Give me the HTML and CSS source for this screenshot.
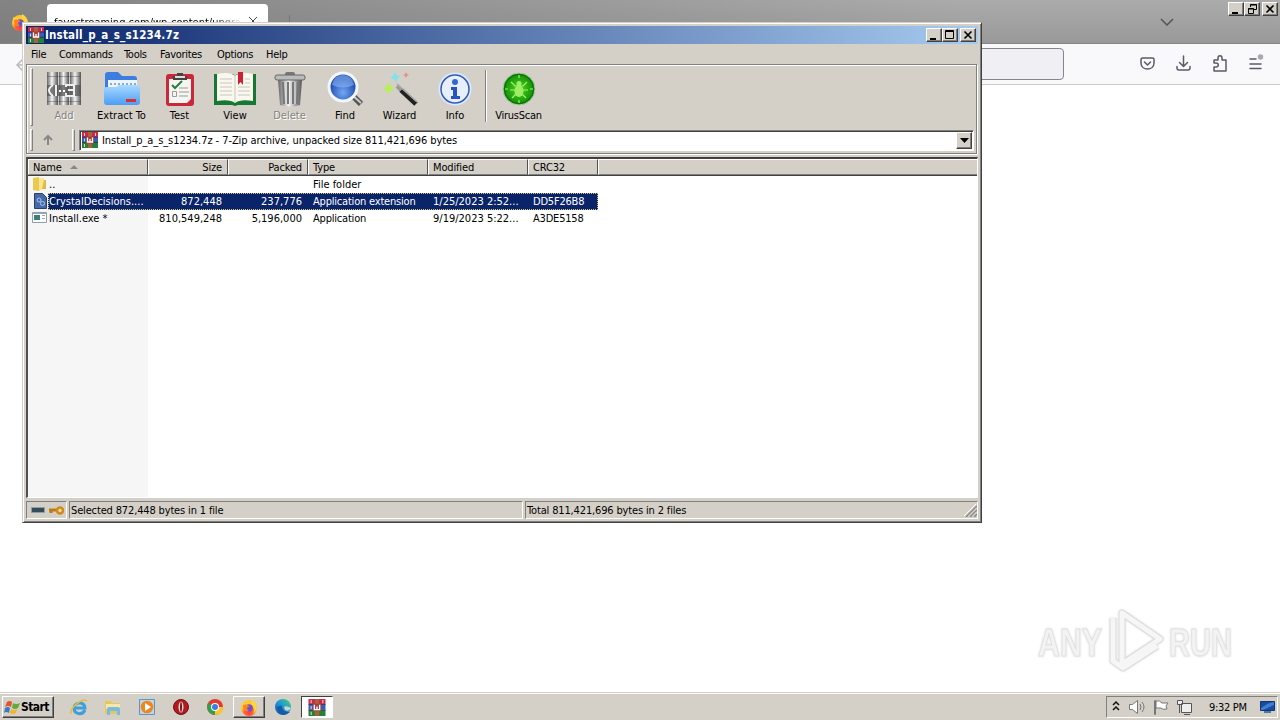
FILE: index.html
```
<!DOCTYPE html>
<html lang="en">
<head>
<meta charset="utf-8">
<title>Install_p_a_s_s1234.7z</title>
<link rel="stylesheet" href="styles.css">
</head>
<body>
<svg class="defs" width="0" height="0">
  <defs>
    <linearGradient id="silver"><stop offset="0" stop-color="#666"/><stop offset=".45" stop-color="#f4f4f4"/><stop offset="1" stop-color="#555"/></linearGradient>
    <linearGradient id="folder" x2="0" y2="1"><stop offset="0" stop-color="#a9daff"/><stop offset="1" stop-color="#4c9cf5"/></linearGradient>
    <radialGradient id="lens" cy=".7"><stop offset="0" stop-color="#74a8f4"/><stop offset="1" stop-color="#1f4db0"/></radialGradient>
    <radialGradient id="green"><stop offset="0" stop-color="#4fd61c"/><stop offset="1" stop-color="#118a08"/></radialGradient>
    <radialGradient id="fox" cy=".8"><stop offset="0" stop-color="#ff3b52"/><stop offset=".6" stop-color="#ff6a28"/><stop offset="1" stop-color="#ffc531"/></radialGradient>
    <linearGradient id="edge" x1="1" x2="0" y2="1"><stop offset="0" stop-color="#4bcf74"/><stop offset=".5" stop-color="#1a98dc"/><stop offset="1" stop-color="#134b9b"/></linearGradient>
    <symbol id="books" viewBox="0 0 16 16">
      <path fill="#c92a48" d="M0 0h16v5H0z"/><path fill="#2f5fc0" d="M0 5h16v5H0z"/><path fill="#23813c" d="M0 10h16v6H0z"/>
      <path stroke="#3b2040" stroke-width=".7" d="M0 5.200h16M0 10.400h16"/><path stroke="#f0c8d4" stroke-width="1" d="M2.500 1v3M2.500 6.500v3M2.500 12v3M13.500 1v3"/>
      <path fill="#a8623a" d="M6 0h4v16H6z"/><path fill="#a04040" d="M4 4.500h8v7H4z"/><path fill="none" stroke="#fff" stroke-width="1.300" d="M5.500 5.500V10h5V5.500M8 7v3"/>
    </symbol>
    <symbol id="firefox" viewBox="0 0 18 18">
      <circle cx="9" cy="10" r="8" fill="url(#fox)"/><path fill="#ffd43c" d="M11 1c6 3 8 10 2 15 2-5 1-8-2-10zM2 4l3 2 2-2 1 3-5 4z"/><circle cx="9" cy="10" r="3.800" fill="#7151c8"/><path fill="#ff8126" d="M3 7c4-1 5 0 7 2-3-1-4 2-1 4-5 1-6-2-6-6z"/>
    </symbol>
  </defs>
</svg>
<div class="desktop">
  <div class="tabstrip">
    <svg class="fx" width="18" height="18"><use href="#firefox"/></svg>
    <div class="tab"><span>favostreaming.com/wp-content/upgra</span><svg width="10" height="10"><path d="M1 1l8 8M9 1L1 9" stroke="#444" fill="none"/></svg></div>
    <i class="tabline"></i>
    <svg class="chev" width="14" height="8"><path d="M1 1l6 6 6-6" stroke="#555" stroke-width="1.5" fill="none"/></svg>
    <div class="winbtns outer">
      <b class="wb"><svg width="14" height="12"><path d="M3 9h6v2H3z"/></svg></b><b class="wb"><svg width="14" height="12"><path fill="none" stroke="#000" d="M5.500 4V1.500h6v5H9M5 2h7M3.500 5.500h5v5h-5zM3 6h6"/></svg></b><b class="wb gap"><svg width="14" height="12"><path stroke="#000" stroke-width="1.6" d="M3.500 2.500l7 7M10.500 2.500l-7 7"/></svg></b>
    </div>
  </div>
  <div class="navbar">
    <svg class="back" width="12" height="14"><path d="M8 1L2 7l6 6M2 7h10" fill="none" stroke="#bbb" stroke-width="1.5"/></svg>
    <div class="urlbar"></div>
    <svg class="navicons" width="126" height="22" fill="none" stroke="#5b5b66" stroke-width="1.5" stroke-linecap="round" stroke-linejoin="round">
      <path d="M3.500 6h10q1.500 0 1.500 1.500V11c0 8-13 8-13 0V7.500Q2 6 3.500 6zM5.500 10l3 3 3-3"/>
      <path d="M44.500 4v10M40.500 10.500l4 4 4-4M38 14.500V16q0 2 2 2h9q2 0 2-2v-1.500"/>
      <path d="M75 19v-4h2c3 0 3-4 0-4h-2V8h4V6c0-3 4-3 4 0v2h4v11z"/>
      <path d="M111 7h6M111 12h11M111 16.500h11"/><circle cx="121.500" cy="5" r="2" fill="#aaa" stroke="#aaa"/>
    </svg>
  </div>

  <svg class="watermark" width="230" height="76">
    <g stroke="#e2e2e2" stroke-width="1" fill="#f3f3f3">
      <text x="8" y="54" textLength="64" lengthAdjust="spacingAndGlyphs">ANY</text><text x="139" y="54" textLength="63" lengthAdjust="spacingAndGlyphs">RUN</text>
    </g>
    <g fill="none" stroke-linejoin="round">
      <path d="M92 11l38 26-38 25zM83 16v43l10 7 34-22" stroke="#ddd" stroke-width="7"/><path d="M92 11l38 26-38 25zM83 16v43l10 7 34-22" stroke="#f6f6f6" stroke-width="5"/>
    </g>
  </svg>

  <main class="window">
    <div class="titlebar">
      <svg width="16" height="16"><use href="#books"/></svg><span>Install_p_a_s_s1234.7z</span>
      <div class="winbtns">
        <b class="wb"><svg width="14" height="12"><path d="M3 9h6v2H3z"/></svg></b><b class="wb"><svg width="14" height="12"><path fill="none" stroke="#000" d="M2.500 1.500h8v8h-8zM2 2.500h9"/></svg></b><b class="wb gap"><svg width="14" height="12"><path stroke="#000" stroke-width="1.6" d="M3.500 2.500l7 7M10.500 2.500l-7 7"/></svg></b>
      </div>
    </div>
    <nav class="menu"><span class="m1">File</span><span class="m2">Commands</span><span class="m3">Tools</span><span class="m4">Favorites</span><span class="m5">Options</span><span>Help</span></nav>
    <section class="bars">
      <div class="toolbar">
        <i class="grip"></i>
        <div class="tool t1 off"><svg width="36" height="36"><rect x="1" y="1" width="11" height="33" fill="url(#silver)"/><rect x="13" y="1" width="10" height="33" fill="url(#silver)"/><rect x="24" y="1" width="11" height="33" fill="url(#silver)"/><path fill="#555" opacity=".75" d="M1 14h34v11H1z"/><path fill="#333" opacity=".35" d="M1 5h34v1H1zM1 30h34v1H1z"/><path fill="none" stroke="#eee" stroke-width="2" d="M7 14q-8 5 0 11M10 14v11M20 16v-2h8v11h-8v-3M22 19h6"/><path stroke="#fff" stroke-width="2" stroke-dasharray="2 2" d="M13 20h7"/></svg><span>Add</span></div>
        <div class="tool t2"><svg width="38" height="36"><path fill="#3c7de0" d="M2 4q0-3 3-3h10l4 4h12q3 0 3 3v20H2z"/><path fill="#eef4fa" d="M5 9h29v13H5z"/><path stroke="#7caee2" stroke-dasharray="2 2" stroke-width="2" d="M7 13h26"/><path fill="url(#folder)" d="M1 18q0-2 3-2h9l3-2h18q3 0 3 3v14q0 3-3 3H4q-3 0-3-3z"/><path fill="#d9302c" d="M23 28h10v3H23z"/></svg><span>Extract To</span></div>
        <div class="tool t3"><svg width="30" height="36"><rect x="1" y="3" width="28" height="32" rx="3" fill="#cc2639"/><path fill="#f5f5f2" d="M4 8h22v20l-4 4H4z"/><path fill="#444" d="M8 5h4V2h6v3h4v4H8z"/><path fill="#ddd" d="M10 5h10v2H10z"/><path fill="none" stroke="#25803d" stroke-width="2" d="M7 14l3 3 7-7"/><path fill="none" stroke="#999" d="M7.500 20.500h4v5h-4zM14 17h9M14 21h10M14 25h9"/></svg><span>Test</span></div>
        <div class="tool t4"><svg width="44" height="36"><path fill="#167833" d="M1 3h19l2 2 2-2h19v31H25l-3 1-3-1H1z"/><path fill="#faf8ee" d="M4 3q13-3 18 2 5-5 18-2v27q-13-2-18 2-5-4-18-2z"/><path stroke="#c8c6bc" d="M22 4v27M7 8h12M7 12h12M7 16h12M7 20h12M7 24h12M25 16h12M25 20h12M25 24h12M32 8h5M32 12h5"/><path fill="#cf1f31" d="M25 1h5v13l-2.500-3L25 14z"/></svg><span>View</span></div>
        <div class="tool t5 off"><svg width="32" height="36"><path fill="#777" d="M11 3q0-2 2-2h6q2 0 2 2v3H11z"/><path fill="url(#silver)" d="M4 9h24l-2 25q-10 3-20 0z"/><path stroke="#777" stroke-width="2" d="M9 11l1 22M14 11v22M19 11v22M24 11l-1 22"/><path stroke="#ddd" d="M11 11l1 22M16.500 11v22M21 11v22"/><rect x="1" y="4" width="30" height="5" rx="2" fill="#bbb" stroke="#666"/></svg><span>Delete</span></div>
        <div class="tool t6"><svg width="36" height="36"><path stroke="#555" stroke-width="6" d="M24 23l10 10"/><path stroke="#ccc" stroke-width="2" d="M24 23l10 9"/><circle cx="16" cy="16" r="14" fill="url(#lens)" stroke="#f2f6ff" stroke-width="3"/><path fill="#94bdfa" opacity=".55" d="M5 14q2-10 11-10t11 10q-11 5-22 0z"/></svg><span>Find</span></div>
        <div class="tool t7"><svg width="36" height="36"><path stroke="#222" stroke-width="5" d="M19 19l15 14"/><path stroke="#999" stroke-width="4" d="M15 15l4 4"/><path stroke="#aaa" stroke-width="1.500" d="M15 13l20 18"/><path fill="#b7ef58" d="M6 11l2 4 5 1-4 3-1 4-3-3-4-1 3-3z"/><path fill="#7be4ed" d="M13 1l1 3 4 1-3 3-1 4-2-4-4-1 3-2z"/><path fill="#ee8b88" d="M24 1l1 2 2 1-2 1-1 2-1-2-2-1 2-1z"/></svg><span>Wizard</span></div>
        <div class="tool t8"><svg width="36" height="36"><circle cx="18" cy="18" r="16.500" fill="#dbe8ff"/><circle cx="18" cy="18" r="14" fill="#e7efff" stroke="#315caf" stroke-width="1.500"/><circle cx="18" cy="11" r="3" fill="#3468d1"/><path fill="#2456bd" d="M14 16h6v9h3v3h-9v-3h2v-6h-2z"/></svg><span>Info</span></div>
        <i class="sep"></i>
        <div class="tool t9"><svg width="36" height="36"><circle cx="18" cy="18" r="16" fill="url(#green)" stroke="#b2c8ac"/><circle cx="18" cy="18" r="14.500" fill="none" stroke="#096c09"/><path fill="none" stroke="#9afa64" stroke-width="1.200" d="M10 11l4 4h8l4-4M9 19h18M11 27l4-4M25 27l-4-4M18 4v3M18 29v3M4 18h3M29 18h3"/><ellipse cx="18" cy="20" rx="4.500" ry="6" fill="#9fed67"/><circle cx="18" cy="12.500" r="2.500" fill="#9fed67"/></svg><span>VirusScan</span></div>
      </div>
      <div class="address">
        <i class="grip"></i><svg class="up" width="12" height="12"><path d="M6 11V2M2 6l4-4 4 4" fill="none" stroke="#888" stroke-width="2"/></svg><i class="grip g2"></i>
        <div class="combo"><svg width="16" height="16"><use href="#books"/></svg><span>Install_p_a_s_s1234.7z - 7-Zip archive, unpacked size 811,421,696 bytes</span><b><svg width="9" height="5"><path d="M0 0h9L4.500 5z"/></svg></b></div>
      </div>
    </section>
    <section class="list">
      <div class="row head"><span>Name <svg width="8" height="5"><path fill="#888" d="M0 4l4-4 4 4z"/></svg></span><span class="n">Size</span><span class="n">Packed</span><span>Type</span><span>Modified</span><span>CRC32</span><span></span></div>
      <div class="row"><span><svg width="16" height="16"><path fill="#e9c94f" d="M1 2l6-1v14l-6-1z"/><path fill="#f9e490" d="M7 2h5v11l-5 2z"/><path fill="#dfba45" d="M12 4h2v9h-4z"/></svg><em>..</em></span><span></span><span></span><span>File folder</span><span></span><span></span></div>
      <div class="row sel"><span><svg width="16" height="16"><path fill="#4669a7" stroke="#293e72" d="M2.500.500h8l4 4v11h-12z"/><g fill="none" stroke="#a8c5ef"><circle cx="7" cy="7" r="2"/><circle cx="10.500" cy="10.500" r="2"/></g></svg><em>CrystalDecisions....</em></span><span class="n">872,448</span><span class="n">237,776</span><span class="type">Application extension</span><span>1/25/2023 2:52...</span><span class="crc">DD5F26B8</span></div>
      <div class="row"><span><svg width="16" height="16"><path fill="#fff" stroke="#8d9eae" d="M.500 2.500h14v10H.500z"/><path fill="#398078" d="M2 5h6v5H2z"/><path stroke="#9aa9b8" d="M10 5.500h3M10 8.500h3M1 3.500h13"/></svg><em>Install.exe *</em></span><span class="n">810,549,248</span><span class="n">5,196,000</span><span class="type">Application</span><span>9/19/2023 5:22...</span><span class="crc">A3DE5158</span></div>
    </section>
    <footer class="status">
      <div class="s1"><svg width="36" height="14"><path fill="#374c59" stroke="#8ba0aa" d="M3.500 4.500h13v5h-13z"/><path stroke="#bd7b16" stroke-width="3" d="M21 7h9M23 7v3"/><circle cx="32" cy="7.500" r="3" fill="#f9dfa0" stroke="#d18a18" stroke-width="2.500"/></svg></div>
      <div class="s2">Selected 872,448 bytes in 1 file</div>
      <div class="s3"><span>Total 811,421,696 bytes in 2 files</span><svg width="13" height="13"><path stroke="#fff" d="M0 12L12 0M4 12l8-8M8 12l4-4"/><path stroke="#888" stroke-width="1.500" d="M2 13L13 2M6 13l7-7M10 13l3-3"/></svg></div>
    </footer>
  </main>

  <div class="taskbar">
    <div class="start"><svg width="17" height="16"><path fill="#e5532d" d="M3 3q3-2 5 0L7 8Q4 6 1 8z"/><path fill="#65a93b" d="M9 4q3 2 7 0l-2 5q-3 2-6 0z"/><path fill="#377bc5" d="M1 9q3-2 5 0l-1 5q-3-2-5 0z"/><path fill="#f3b52a" d="M7 10q3 2 6 0l-1 4q-3 2-6 0z"/></svg><span>Start</span></div>
    <div class="task"><svg width="18" height="18"><path d="M15 12c-3 6-11 4-11-2s11-7 11 0H5" fill="none" stroke="#3ba0dc" stroke-width="3"/><path d="M1 16C-1 11 12-1 17 3" fill="none" stroke="#e8bd38" stroke-width="1.500"/></svg></div>
    <div class="task"><svg width="18" height="18"><path fill="#e8c75a" d="M1 3h6l1 2h8v11H1z"/><path fill="#f9e8a2" d="M2 6h14v5H2z"/><path fill="#77bbe4" d="M3 11q0-2 2-2h9q2 0 2 2v6h-3v-4H6v4H3z"/></svg></div>
    <div class="task"><svg width="18" height="18"><path fill="#b9d7eb" stroke="#6394bd" d="M1.500 1.500h15v15h-15z"/><circle cx="9" cy="9" r="6.300" fill="#f0851d"/><path fill="#fff" d="M7 5l6 4-6 4z"/></svg></div>
    <div class="task"><svg width="18" height="18"><circle cx="9" cy="9" r="7.500" fill="#b41820" stroke="#701018"/><ellipse cx="9" cy="9" rx="2.500" ry="5.500" fill="#e8d8d3"/><ellipse cx="9" cy="9" rx="1" ry="5" fill="#82151a"/></svg></div>
    <div class="task"><svg width="18" height="18"><circle cx="9" cy="9" r="8" fill="#e33b2e"/><path fill="#2ba24c" d="M9 9L2 5q-3 10 7 12z"/><path fill="#f9c82e" d="M9 9h8q0 8-8 8z"/><circle cx="9" cy="9" r="4" fill="#fff"/><circle cx="9" cy="9" r="3" fill="#3d7be5"/></svg></div>
    <div class="task raised"><svg width="18" height="18"><use href="#firefox"/></svg></div>
    <div class="task"><svg width="18" height="18"><circle cx="9" cy="9" r="8" fill="url(#edge)"/><path fill="#d4d0c8" d="M10 9q2-2 7 1-2 4-6 2z"/><path fill="#155ca6" d="M3 9q5-3 5 0 0 5 8 5-7 6-12 0z"/></svg></div>
    <div class="task pressed"><svg width="18" height="17"><use href="#books"/></svg></div>
    <div class="tray">
      <svg width="86" height="18" fill="none" stroke="#777"><path stroke="#111" stroke-width="1.500" d="M2 7l3-3 3 3M2 12l3-3 3 3"/><path fill="#fff" d="M18.500 6.500h3l5-4v13l-5-4h-3z"/><path d="M29 6q2 3 0 6M31 4q4 5 0 10"/><path fill="#fff" d="M43.500 2.500h1v14h-1zM45 3q4-1 6 2h6l-2 3 1 3q-5 1-6-1h-5z"/><path fill="#eee" stroke="#555" d="M70.500 5.500h10v9h-10zM73 16.500h6M66.500 2.500h5v4h-5zM68.500 7v8"/></svg>
      <span>9:32 PM</span>
      <svg width="16" height="14"><path fill="#174ca4" stroke="#15366c" d="M.500 1.500h14v9H.500z"/><path fill="#3f7fd0" d="M1 8Q7 3 14 2v3L3 10H1z"/><path stroke="#507aa4" stroke-width="2" d="M4 12h7"/></svg>
    </div>
  </div>
</div>
</body>
</html>
```
FILE: styles.css
```
*, *::after { box-sizing: border-box; }
body { margin: 0; overflow: hidden; font: 11px/13px "DejaVu Sans Condensed", "DejaVu Sans", sans-serif; color: #000; letter-spacing: -0.3px; }
svg { display: block; flex: none; }
.defs { position: absolute; }
.desktop { position: relative; width: 1280px; height: 720px; background: #fff; display: flex; flex-direction: column; overflow: hidden; white-space: nowrap; }
.tabstrip { height: 44px; flex: none; background: linear-gradient(90deg, rgba(110,110,110,.65), rgba(110,110,110,0) 75%), linear-gradient(#ababab, #999); border-bottom: 1px solid #858585; display: flex; align-items: flex-start; }
.fx { margin: 13px 0 0 11px; }
.tab { margin: 4px 0 0 18px; width: 221px; height: 40px; background: #fff; border-radius: 4px; padding: 12px 10px 0 7px; display: flex; justify-content: space-between; }
.tab span { width: 188px; overflow: hidden; letter-spacing: 0; mask-image: linear-gradient(90deg, #000 85%, transparent); }
.tabline { margin: 15px 0 0 21px; width: 1px; height: 20px; background: #777; }
.chev { margin: 18px 0 0 870px; }
.winbtns { display: flex; margin-left: auto; }
.winbtns.outer { margin: 2px 2px 0 auto; }
.wb { width: 16px; height: 14px; background: #d4d0c8; border: 1px solid; border-color: #fff #404040 #404040 #fff; box-shadow: inset -1px -1px #808080; }
.wb.gap { margin-left: 2px; }
.navbar { height: 41px; flex: none; background: #f9f9fb; border-bottom: 1px solid #ccc; display: flex; }
.back { margin: 14px 0 0 15px; }
.urlbar { width: 937px; margin: 4px 0 0 100px; height: 32px; border: 1px solid #85858c; border-radius: 4px; background: #f0f0f4; }
.navicons { margin: 8px 0 0 75px; }
.watermark { position: absolute; left: 1030px; top: 602px; font: bold 39px "Liberation Sans Narrow", "Liberation Sans", sans-serif; letter-spacing: 0; filter: drop-shadow(0 0 1px #ddd); }
.window { position: absolute; left: 22px; top: 22px; width: 960px; height: 501px; background: #d4d0c8; border: 1px solid; border-color: #d4d0c8 #404040 #404040 #d4d0c8; box-shadow: inset 1px 1px #fff, inset -1px -1px #808080; padding: 3px; display: flex; flex-direction: column; }
.titlebar { height: 18px; flex: none; background: linear-gradient(90deg, #0a246a, #a6caf0); color: #fff; font: bold 11.5px/18px "DejaVu Sans Condensed", sans-serif; display: flex; align-items: center; padding: 0 2px; gap: 1px; letter-spacing: 0.2px; }
.menu { height: 20px; flex: none; display: flex; padding: 4px 5px 0; }
.menu .m1 { width: 28px; } .menu .m2 { width: 65px; } .menu .m3 { width: 36px; } .menu .m4 { width: 57px; } .menu .m5 { width: 49px; }
.bars { height: 90px; flex: none; border: 1px solid #808080; box-shadow: inset 1px 1px #fff, 1px 1px #fff; padding: 2px 3px; margin-right: 1px; }
.toolbar { height: 61px; display: flex; }
.grip { width: 3px; height: 58px; margin-top: 1px; border: 1px solid; border-color: #fff #808080 #808080 #fff; flex: none; }
.tool { display: flex; flex-direction: column; align-items: center; padding-top: 4px; }
.tool svg { height: 36px; }
.tool span { margin-top: 2px; letter-spacing: 0; }
.off { color: #85827c; text-shadow: 1px 1px #fff; }
.t1 { width: 62px; } .t2 { width: 53px; } .t3 { width: 63px; } .t4 { width: 48px; } .t5 { width: 61px; } .t6 { width: 50px; } .t7 { width: 59px; } .t8 { width: 52px; } .t9 { width: 63px; }
.t9 span { letter-spacing: -0.25px; }
.sep { width: 2px; height: 52px; margin: 3px 0 0 4px; border-left: 1px solid #808080; border-right: 1px solid #fff; }
.address { height: 24px; display: flex; align-items: center; }
.address .grip { height: 22px; margin: 0; }
.up { margin-left: 9px; }
.address .g2 { margin-left: 18px; }
.combo { margin-left: 4px; flex: 1; height: 21px; background: #fff; border: 1px solid; border-color: #808080 #fff #fff #808080; box-shadow: inset 1px 1px #404040; display: flex; align-items: center; padding: 1px 1px 1px 2px; margin-right: -1px; }
.combo span { margin-left: 4px; letter-spacing: -0.07px; }
.combo b { margin-left: auto; width: 16px; height: 17px; background: #d4d0c8; border: 1px solid; border-color: #fff #404040 #404040 #fff; box-shadow: inset -1px -1px #808080; display: grid; place-items: center; }
.list { margin-top: 3px; height: 341px; flex: none; border: 1px solid; border-color: #404040 #fff #fff #505050; border-top-width: 2px; border-left-width: 2px; display: flex; flex-direction: column; background: linear-gradient(90deg, #f6f6f6 120px, #fff 120px); }
.row { height: 17px; flex: none; display: grid; grid-template-columns: 120px 80px 80px 120px 100px 70px 1fr; line-height: 17px; letter-spacing: 0; }
.row > span { padding: 0 6px 0 5px; overflow: hidden; }
.row .n { text-align: right; }
.row .type, .row .crc { letter-spacing: -0.2px; }
.row > span:first-child { display: flex; padding: 0 0 0 4px; }
.row em { font-style: normal; padding-left: 1px; flex: 1; }
.row.head { background: #d4d0c8; border-bottom: 1px solid #404040; }
.row.head > span { border: 1px solid; border-color: #fff #505050 #808080 #fff; line-height: 15px; padding: 0 5px 0 4px; letter-spacing: -0.15px; }
.row.head > span:last-child { border-right: 0; }
.row.head > span:first-child { padding-left: 4px; align-items: center; gap: 8px; }
.sel { position: relative; color: #fff; background: linear-gradient(#0a246a, #0a246a) 20px 0 / 550px 17px no-repeat; }
.sel::after { content: ""; position: absolute; left: 20px; top: 0; width: 550px; height: 17px; border: 1px dotted #d8c57d; }
.status { display: flex; gap: 2px; height: 18px; margin-top: 3px; flex: none; letter-spacing: -0.15px; }
.status > div { border: 1px solid; border-color: #808080 #fff #fff #808080; padding: 2px 1px; }
.status .s1 { width: 41px; padding: 1px; }
.status .s2 { width: 454px; }
.status .s3 { flex: 1; display: flex; justify-content: space-between; padding: 2px 0 0 1px; }
.taskbar { margin-top: auto; height: 28px; background: #d4d0c8; border-top: 1px solid #d4d0c8; box-shadow: inset 0 1px #fff; display: flex; padding: 3px 2px 2px; }
.start { width: 52px; border: 1px solid; border-color: #fff #404040 #404040 #fff; box-shadow: inset -1px -1px #808080; display: flex; align-items: center; font-weight: bold; font-size: 12px; padding-left: 1px; margin-right: 9px; letter-spacing: -0.6px; }
.task { width: 32px; margin-right: 2px; display: grid; place-items: center; border: 1px solid transparent; }
.raised { border-color: #fff #404040 #404040 #fff; box-shadow: inset -1px -1px #808080; }
.pressed { border-color: #404040 #fff #fff #404040; background: #fff; }
.tray { margin-left: auto; width: 172px; border: 1px solid; border-color: #808080 #fff #fff #808080; display: flex; align-items: center; padding: 0 0 0 4px; }
.tray span { width: 51px; margin-left: 12px; }
```
